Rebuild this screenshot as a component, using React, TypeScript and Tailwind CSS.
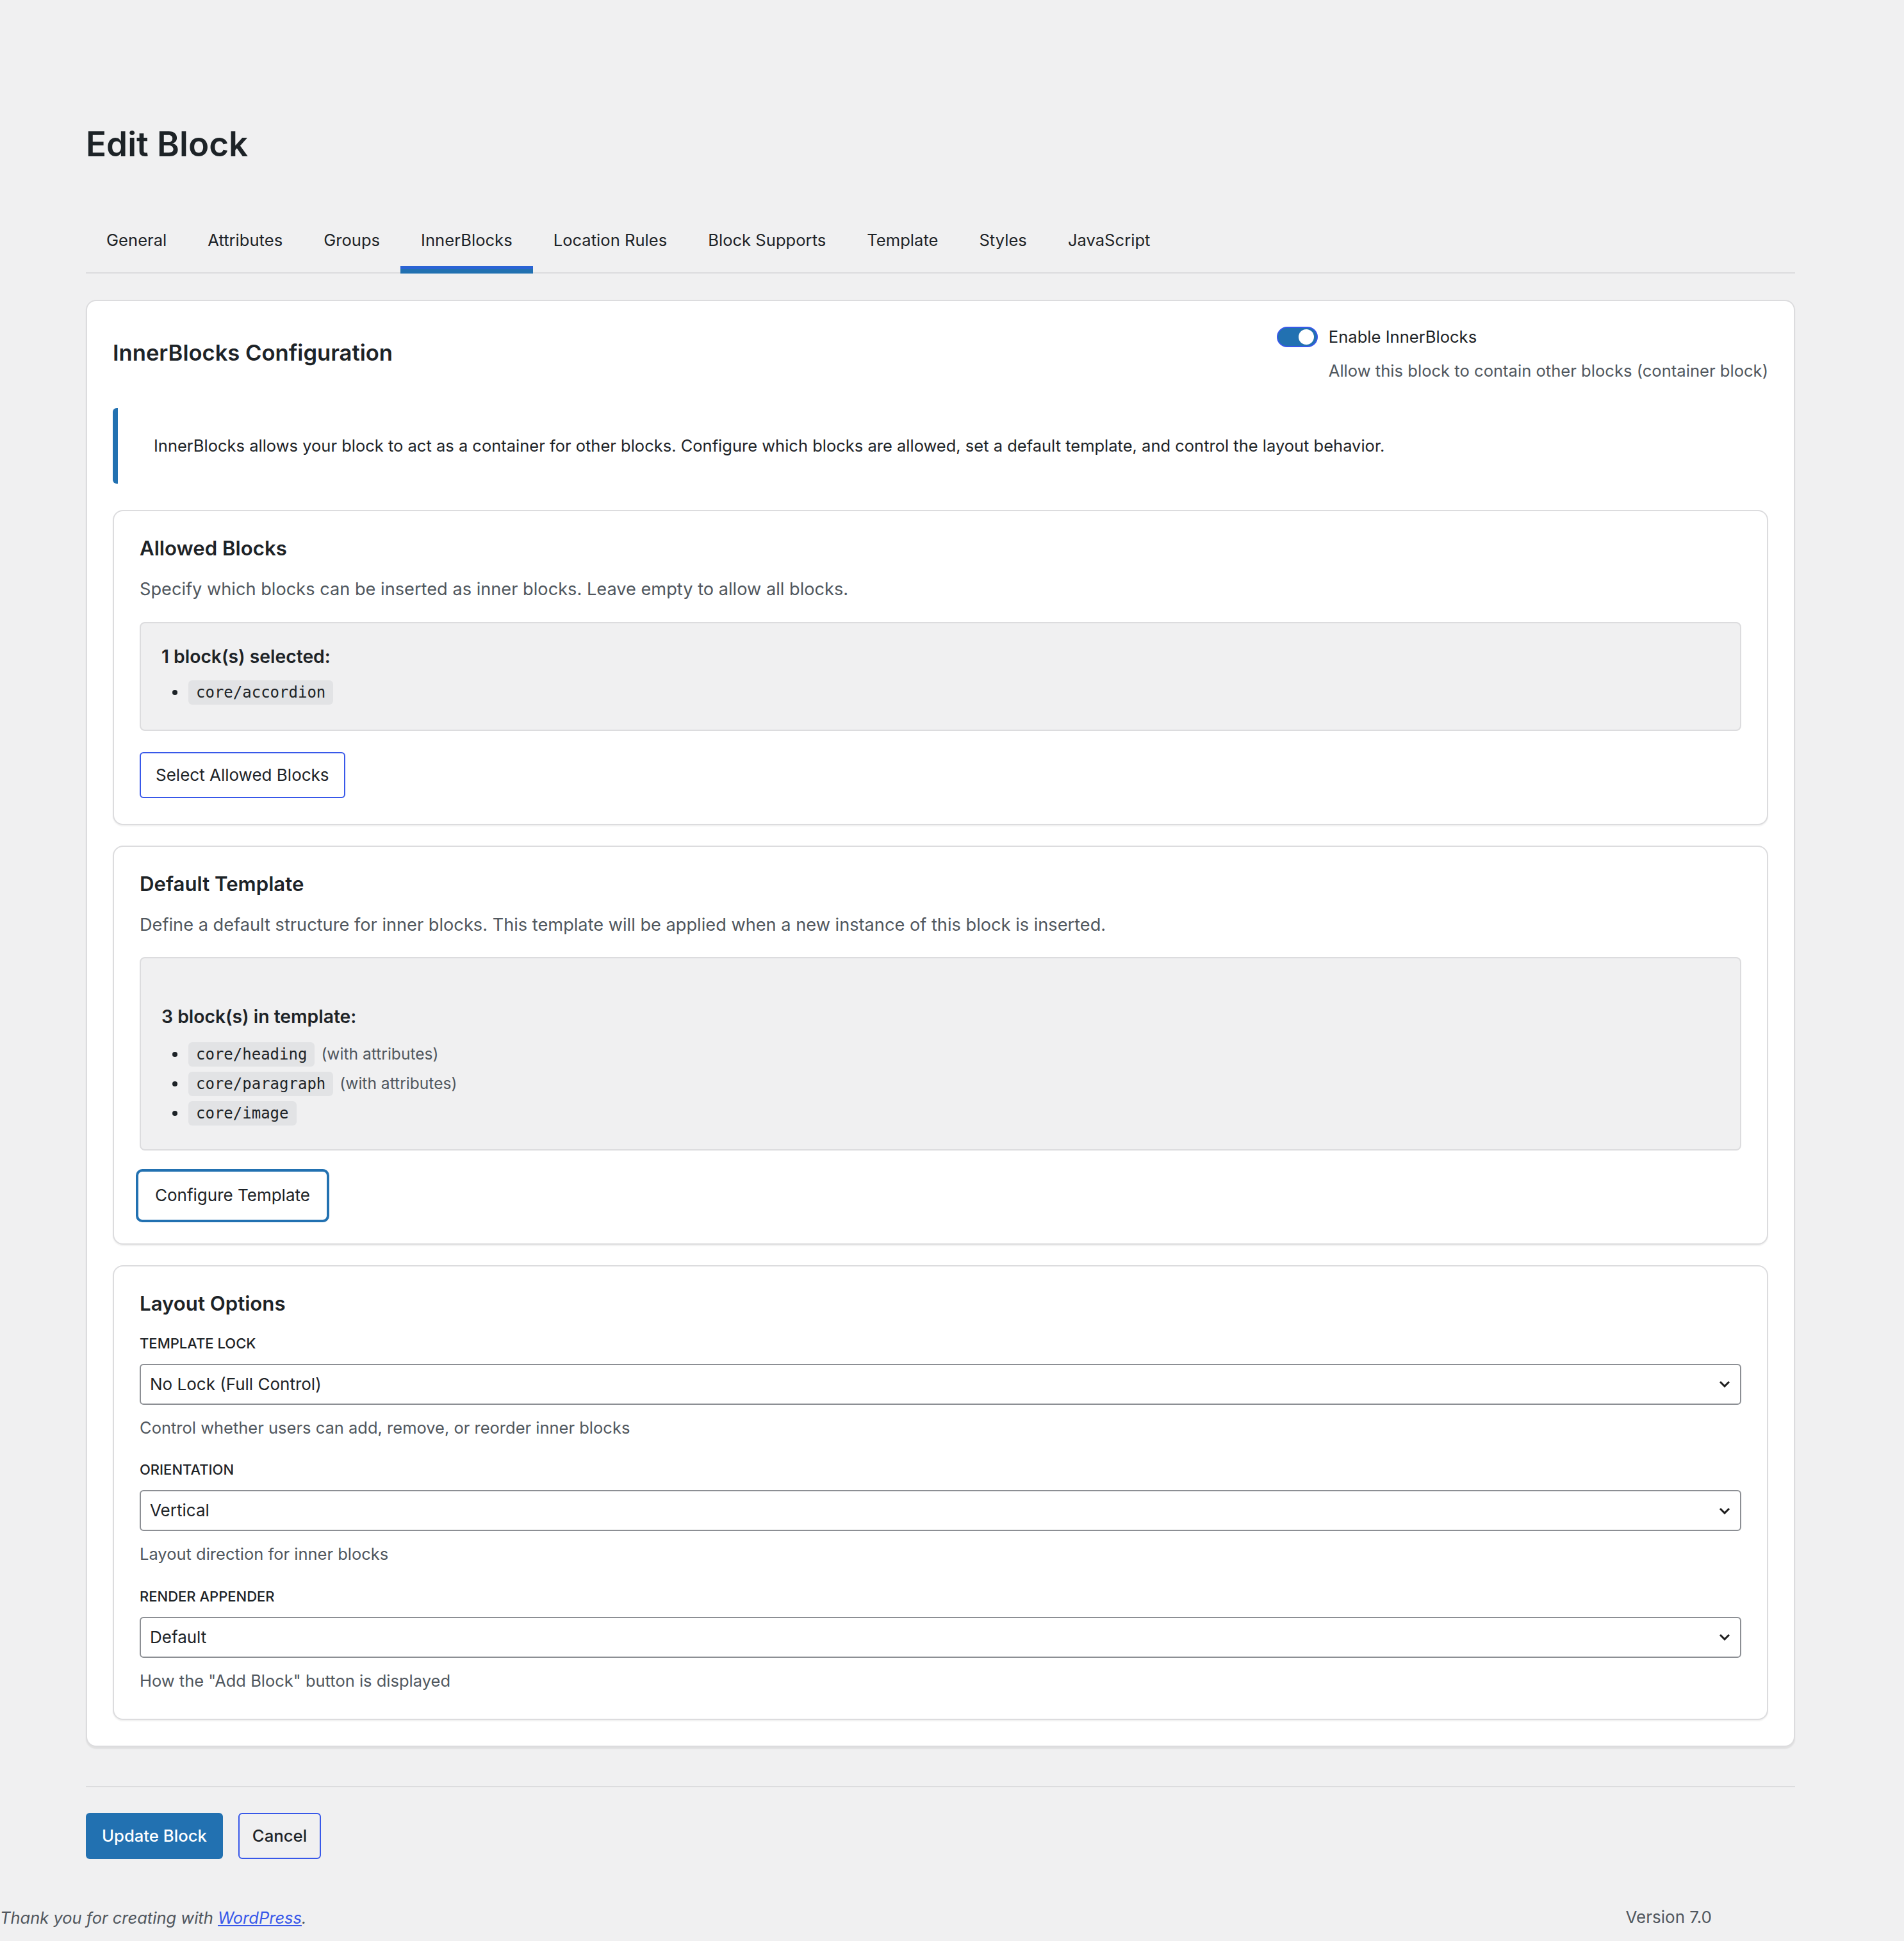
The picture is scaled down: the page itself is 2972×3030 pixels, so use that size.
import React from 'react'

const tabs = ['General', 'Attributes', 'Groups', 'InnerBlocks', 'Location Rules', 'Block Supports', 'Template', 'Styles', 'JavaScript']

const Chip = ({ children }: { children: React.ReactNode }) => (
  <span className="inline-flex h-[38px] items-center rounded-[6px] bg-[#e2e3e5] px-[12px] font-['DejaVu_Sans_Mono',monospace] text-[24px] leading-none text-[#1d2327]">
    {children}
  </span>
)

const Item = ({ name, attrs }: { name: string; attrs?: boolean }) => (
  <li className="flex items-center">
    <span className="mx-[17px] h-[8px] w-[8px] rounded-full bg-[#1d2327]" />
    <Chip>{name}</Chip>
    {attrs && <span className="ml-[10px] text-[24.6px] leading-none text-[#50575e]">(with attributes)</span>}
  </li>
)

const Select = ({ value }: { value: string }) => (
  <div className="flex h-[64px] items-center justify-between rounded-[6px] border-2 border-[#8c8f94] bg-white pl-[14px] pr-[15px]">
    <span className="text-[26px] leading-none text-[#1d2327]">{value}</span>
    <svg width="18" height="11" viewBox="0 0 18 11" fill="none">
      <polyline points="2,2 9,9 16,2" stroke="#1e1e1e" strokeWidth="3" />
    </svg>
  </div>
)

const Field = ({ label, value, help, first }: { label: string; value: string; help: string; first?: boolean }) => (
  <div className={first ? 'mt-[35px]' : 'mt-[42px]'}>
    <div className="text-[22px] font-medium uppercase leading-none text-[#1d2327]">{label}</div>
    <div className="mt-[21px]">
      <Select value={value} />
    </div>
    <p className="mt-[23px] text-[25.5px] leading-none text-[#50575e]">{help}</p>
  </div>
)

const Section = ({ title, desc, children, className }: { title: string; desc?: string; children: React.ReactNode; className?: string }) => (
  <section className={`rounded-[16px] border-2 border-[#dcdcde] bg-white px-[40px] pt-[40px] shadow-[0_2px_2px_rgba(0,0,0,0.06)] ${className ?? ''}`}>
    <h3 className="mt-[3px] text-[31.2px] font-semibold leading-none text-[#1d2327]">{title}</h3>
    {desc && <p className="mt-[34px] text-[27.2px] leading-none text-[#50575e]">{desc}</p>}
    {children}
  </section>
)

export default function App() {
  return (
    <div className="flex h-[3030px] w-[2972px] flex-col bg-[#f0f0f1] font-['Inter',sans-serif] text-[#1d2327]">
      <div className="pl-[134px] pr-[170px]">
        <h1 className="mt-[199px] text-[53px] font-semibold leading-none text-[#1d2327]">Edit Block</h1>

        <nav className="mt-[72px] flex border-b-2 border-[#dcdcde]">
          {tabs.map(t => (
            <a
              key={t}
              className={`-mb-[2px] px-[32px] pb-[32px] pt-[38px] text-[25.6px] leading-none text-[#1d2327] ${
                t === 'InnerBlocks' ? 'border-b-[7px] border-[#2271b1] shadow-[inset_0_-5px_0_#2a63d4]' : 'border-b-[7px] border-transparent'
              }`}
            >
              {t}
            </a>
          ))}
        </nav>

        <div className="mt-[41px] rounded-[16px] border-2 border-[#dcdcde] bg-white p-[40px] shadow-[0_3px_2px_rgba(0,0,0,0.07)]">
          <div className="flex items-center justify-between">
            <h2 className="text-[34.6px] font-semibold leading-none text-[#1d2327]">InnerBlocks Configuration</h2>
            <div className="flex flex-col">
              <div className="flex items-center">
                <span className="flex h-[32px] w-[64px] items-center justify-end rounded-full border-2 border-[#3858e9] bg-[#2271b1] pr-[4px]">
                  <span className="h-[24px] w-[24px] rounded-full bg-white" />
                </span>
                <span className="ml-[17px] text-[25.6px] leading-none text-[#1d2327]">Enable InnerBlocks</span>
              </div>
              <p className="mt-[24px] pl-[81px] text-[25.6px] leading-none text-[#50575e]">Allow this block to contain other blocks (container block)</p>
            </div>
          </div>

          <div className="mt-[46px] flex h-[118px] items-center rounded-l-[6px] border-l-[8px] border-[#2271b1] bg-white pl-[56px]">
            <p className="text-[25.5px] leading-none text-[#1d2327]">
              InnerBlocks allows your block to act as a container for other blocks. Configure which blocks are allowed, set a default template, and control the layout behavior.
            </p>
          </div>

          <Section
            className="mt-[41px] pb-[40px]"
            title="Allowed Blocks"
            desc="Specify which blocks can be inserted as inner blocks. Leave empty to allow all blocks."
          >
            <div className="mt-[37px] rounded-[8px] border-2 border-[#dcdcde] bg-[#f0f0f1] pb-[39px] pl-[32px] pt-[38px]">
              <p className="text-[28.3px] font-semibold leading-none text-[#1d2327]">1 block(s) selected:</p>
              <ul className="mt-[23px] flex flex-col gap-[8px]">
                <Item name="core/accordion" />
              </ul>
            </div>
            <button className="mt-[33px] flex h-[72px] items-center rounded-[6px] border-2 border-[#3858e9] bg-white px-[23px] text-[26px] leading-none text-[#1d2327]">
              Select Allowed Blocks
            </button>
          </Section>

          <Section
            className="mt-[32px] pb-[40px]"
            title="Default Template"
            desc="Define a default structure for inner blocks. This template will be applied when a new instance of this block is inserted."
          >
            <div className="mt-[37px] rounded-[8px] border-2 border-[#dcdcde] bg-[#f0f0f1] pb-[37px] pl-[32px] pt-[77px]">
              <p className="text-[28.3px] font-semibold leading-none text-[#1d2327]">3 block(s) in template:</p>
              <ul className="mt-[25px] flex flex-col gap-[8px]">
                <Item name="core/heading" attrs />
                <Item name="core/paragraph" attrs />
                <Item name="core/image" />
              </ul>
            </div>
            <button className="-mb-[7px] -ml-[6px] mt-[29px] flex h-[83px] items-center rounded-[10px] border-[4px] border-[#2271b1] bg-white px-[26px] text-[26px] leading-none text-[#1d2327]">
              Configure Template
            </button>
          </Section>

          <Section className="mt-[32px] pb-[47px]" title="Layout Options">
            <Field first label="Template Lock" value="No Lock (Full Control)" help="Control whether users can add, remove, or reorder inner blocks" />
            <Field label="Orientation" value="Vertical" help="Layout direction for inner blocks" />
            <Field label="Render Appender" value="Default" help={'How the "Add Block" button is displayed'} />
          </Section>
        </div>

        <div className="mt-[61px] h-[2px] bg-[#dcdcde]" />

        <div className="mt-[40px] flex gap-[24px]">
          <button className="flex h-[72px] items-center rounded-[6px] bg-[#2271b1] px-[25px] text-[25.7px] font-medium leading-none text-white">
            Update Block
          </button>
          <button className="flex h-[72px] items-center rounded-[6px] border-2 border-[#3858e9] px-[20px] text-[25.7px] font-medium leading-none text-[#1d2327]">
            Cancel
          </button>
        </div>
      </div>

      <footer className="mt-[78px] flex items-center justify-between pr-[300px]">
        <p className="text-[25.5px] italic leading-none text-[#50575e]">
          Thank you for creating with <a className="text-[#3858e9] underline">WordPress</a>.
        </p>
        <p className="text-[26px] leading-none text-[#50575e]">Version 7.0</p>
      </footer>
    </div>
  )
}
